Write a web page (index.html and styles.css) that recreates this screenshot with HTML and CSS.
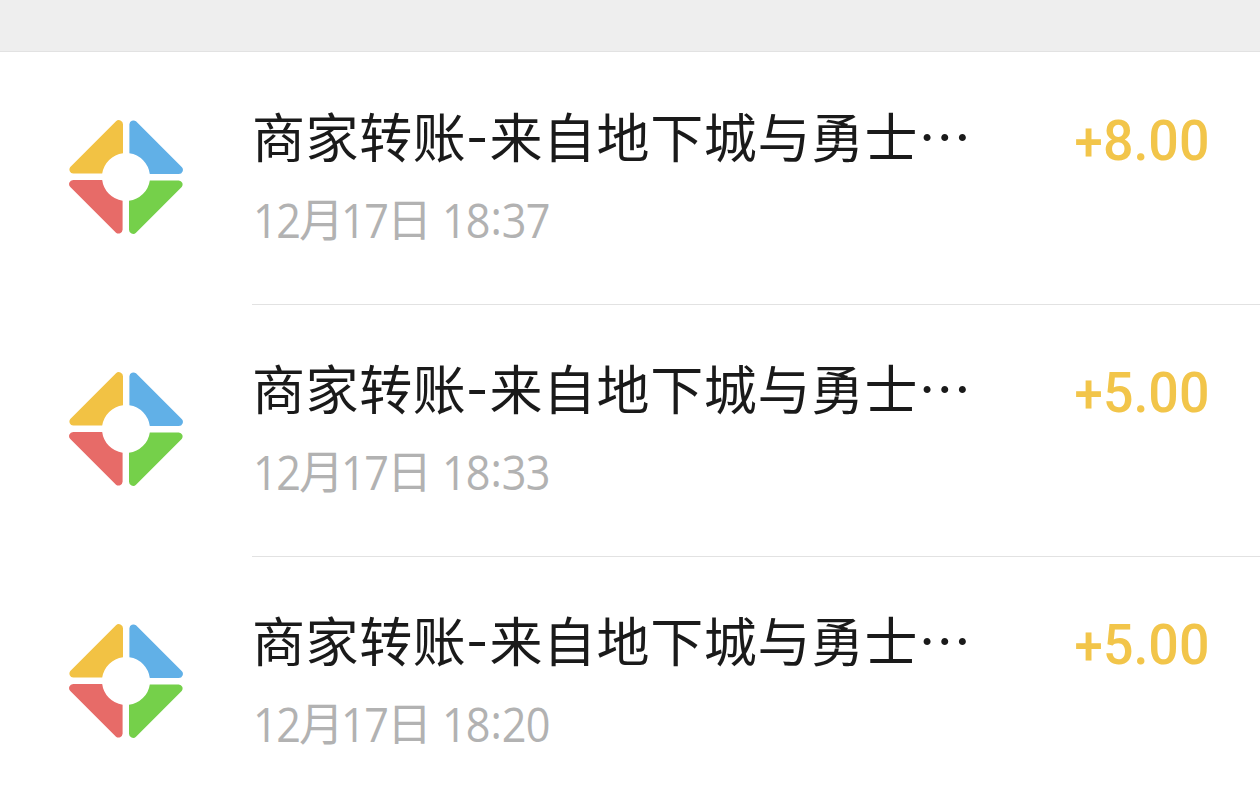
FILE: index.html
```
<!doctype html>
<html lang="zh-CN">
<head>
<meta charset="utf-8">
<title>零钱明细</title>
<link rel="stylesheet" href="styles.css">
</head>

<body>
<svg class="defs">
	<defs>
		<path id="part" d="M54 33.2V4.2A4.1 4.1 0 0 0 47 1.3L1.3 47A4.1 4.1 0 0 0 4.2 53.6H33.2A24 24 0 0 1 54 33.2Z"/>
		<g id="logo">
			<use href="#part" fill="#f2c244"/>
			<use href="#part" fill="#61b0e7" transform="rotate(90 57 57)"/>
			<use href="#part" fill="#75d04a" transform="rotate(180 57 57)"/>
			<use href="#part" fill="#e76b68" transform="rotate(270 57 57)"/>
		</g>
	</defs>
</svg>
<div class="top"></div>
<ul class="list">
	<li>
		<svg class="logo" viewBox="0 0 114 114"><use href="#logo"/></svg>
		<div class="con">
			<div class="info">
				<p class="title">商家转账<span class="dash">-</span>来自地下城与勇士<span class="more">⋯</span></p>
				<p class="time"><span>12</span><b>月</b><span>17</span><b>日</b><span class="clock">18<i>:</i>37</span></p>
			</div>
			<div class="money"><span>+</span>8.00</div>
		</div>
	</li>
	<li>
		<svg class="logo" viewBox="0 0 114 114"><use href="#logo"/></svg>
		<div class="con">
			<div class="info">
				<p class="title">商家转账<span class="dash">-</span>来自地下城与勇士<span class="more">⋯</span></p>
				<p class="time"><span>12</span><b>月</b><span>17</span><b>日</b><span class="clock">18<i>:</i>33</span></p>
			</div>
			<div class="money"><span>+</span>5.00</div>
		</div>
	</li>
	<li>
		<svg class="logo" viewBox="0 0 114 114"><use href="#logo"/></svg>
		<div class="con">
			<div class="info">
				<p class="title">商家转账<span class="dash">-</span>来自地下城与勇士<span class="more">⋯</span></p>
				<p class="time"><span>12</span><b>月</b><span>17</span><b>日</b><span class="clock">18<i>:</i>20</span></p>
			</div>
			<div class="money"><span>+</span>5.00</div>
		</div>
	</li>
</ul>
</body>
</html>
```
FILE: styles.css
```
*{ padding:0; margin:0; box-sizing:border-box;}
html{ overflow:hidden;}
body{ background-color:#fff; font-family:"Noto Sans CJK SC",sans-serif; height:793px; overflow:hidden;}
ul{ list-style:none;}
i{ font-style:normal;}
b{ font-weight:400;}
.defs{ display:block; width:0; height:0;}
.top{ height:52px; background-color:#eee; border-bottom:1px solid #e2e2e2;}
.list li{ display:flex; height:252px; padding-left:69px;}
.logo{ width:114px; height:114px; margin-top:67.5px; flex:none;}
.con{ flex:1; display:flex; justify-content:space-between; margin-left:69px; padding:51px 51px 0 0; border-bottom:1px solid #e2e2e2; height:253px;}
.list li:last-child .con{ border-bottom:0;}
.title{ font-size:53px; line-height:64px; letter-spacing:.6px; color:#1a1a1a; white-space:nowrap;}
.dash{ display:inline-block; width:23px; text-align:center; font-family:Roboto,sans-serif; transform:translateY(-2px) scaleX(1.25);}
.more{ letter-spacing:0;}
.time{ display:flex; margin:18px 0 0 1px; line-height:60px; color:#b2b2b2;}
.time span{ font-family:"Open Sans",sans-serif; font-size:48px; letter-spacing:-1.5px; width:46px; transform:scaleX(.9); transform-origin:left top;}
.time b{ width:42px; font-size:45px; line-height:55px;}
.time b:nth-of-type(2){ width:55px;}
.time .clock{ width:auto; letter-spacing:-1px;}
.clock i{ position:relative; top:-3px; margin:0 1px;}
.money{ font-family:Roboto,sans-serif; font-size:56px; line-height:77px; font-weight:500; color:#f2c54a; transform:scaleX(.96); transform-origin:right top;}
.money span{ font-size:53px;}
```
